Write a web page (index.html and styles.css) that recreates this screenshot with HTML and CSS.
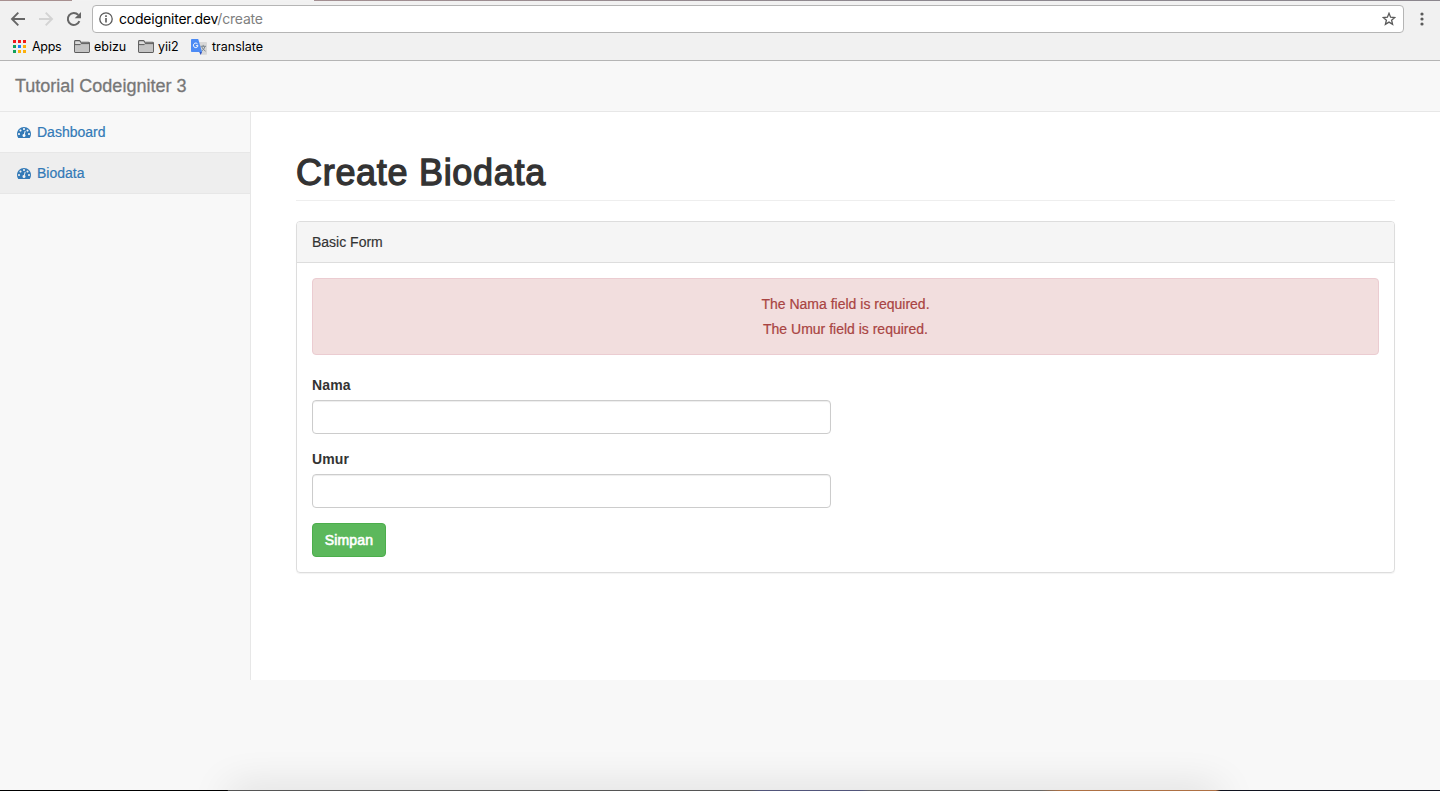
FILE: index.html
```
<!DOCTYPE html>
<html lang="id">
<head>
<meta charset="utf-8">
<title>Tutorial Codeigniter 3</title>
<link rel="stylesheet" href="styles.css">
</head>
<body>
<svg class="defs" aria-hidden="true">
  <symbol id="gauge" viewBox="0 0 1792 1792"><path d="M384 1152q0-53-37.5-90.5t-90.5-37.5-90.5 37.5-37.5 90.5 37.5 90.5 90.5 37.5 90.5-37.5 37.5-90.5zm192-448q0-53-37.5-90.5t-90.5-37.5-90.5 37.5-37.5 90.5 37.5 90.5 90.5 37.5 90.5-37.5 37.5-90.5zm428 481l101-382q6-26-7.5-48.5t-38.5-29.5-48 6.5-30 39.5l-101 382q-60 5-107 43.5t-63 98.5q-20 77 20 146t117 89 146-20 89-117q16-60-6-117t-72-91zm660-33q0-53-37.5-90.5t-90.5-37.5-90.5 37.5-37.5 90.5 37.5 90.5 90.5 37.5 90.5-37.5 37.5-90.5zm-640-640q0-53-37.5-90.5t-90.5-37.5-90.5 37.5-37.5 90.5 37.5 90.5 90.5 37.5 90.5-37.5 37.5-90.5zm448 192q0-53-37.5-90.5t-90.5-37.5-90.5 37.5-37.5 90.5 37.5 90.5 90.5 37.5 90.5-37.5 37.5-90.5zm320 448q0 261-141 483-19 29-54 29h-1402q-35 0-54-29-141-221-141-483 0-182 71-348t191-286 286-191 348-71 348 71 286 191 191 286 71 348z"/></symbol>
  <symbol id="folder" viewBox="0 0 16 13"><path d="M.6 11.6V1.5q0-.9.9-.9h3.8q.6 0 .9.6l.5 1h7.8q.9 0 .9.9v8.5q0 .8-.8.8H1.400q-.8 0-.8-.8z" fill="#dcdcdc" stroke="#5c5c5c" stroke-width="1.100"/><path d="M1.200 4.500h5l.8-.9h7.900v8.300H1.200z" fill="#c4c4c4"/><path d="M.8 4.600h5.400l.9-1h8" fill="none" stroke="#5c5c5c"/></symbol>
</svg>
<div class="window">
  <header class="chrome">
    <div class="toolbar">
      <svg class="nav-icon" width="16" height="16" viewBox="0 0 16 16" fill="none" stroke="#666" stroke-width="1.900"><path d="M15 8H2.500M8.300 1.700L2 8l6.300 6.300"/></svg>
      <svg class="nav-icon" width="16" height="16" viewBox="0 0 16 16" fill="none" stroke="#d3d3d3" stroke-width="1.900"><path d="M1 8h12.500M7.700 1.700L14 8l-6.300 6.300"/></svg>
      <svg class="nav-icon" width="16" height="16" viewBox="0 0 16 16"><path d="M13.400 10.200A6 6 0 1 1 12.300 3.900" fill="none" stroke="#666" stroke-width="2"/><path d="M15 1v6.300H8.700z" fill="#666"/></svg>
      <div class="address">
        <svg width="14" height="14" viewBox="0 0 14 14"><circle cx="7" cy="7" r="6.200" fill="none" stroke="#5a5a5a" stroke-width="1.300"/><path d="M7 6v4.500M7 3.300v1.600" stroke="#5a5a5a" stroke-width="1.600"/></svg>
        <span class="url">codeigniter.dev<span class="path">/create</span></span>
        <svg class="star" width="14" height="14" viewBox="0 0 14 14"><path d="M7 1.300l1.600 3.900 4.200.3-3.200 2.700 1 4.100L7 10.100l-3.600 2.200 1-4.100L1.200 5.500l4.200-.3z" fill="none" stroke="#5a5a5a" stroke-width="1.300"/></svg>
      </div>
      <svg class="more" width="4" height="14" viewBox="0 0 4 14" fill="#5a5a5a"><circle cx="2" cy="2" r="1.600"/><circle cx="2" cy="7" r="1.600"/><circle cx="2" cy="12" r="1.600"/></svg>
    </div>
    <nav class="bookmarks">
      <span class="bookmark apps"><svg width="13" height="13" viewBox="0 0 13 13"><path d="M0 0h3v3H0zM5 0h3v3H5zM10 0h3v3h-3z" fill="#f31a1a"/><path d="M0 5h3v3H0zM0 10h3v3H0z" fill="#12a15c"/><path d="M5 5h3v3H5z" fill="#1a82f7"/><path d="M10 5h3v3h-3zM5 10h3v3H5zM10 10h3v3h-3z" fill="#fcb00b"/></svg>Apps</span>
      <span class="bookmark ebizu"><svg width="16" height="13"><use href="#folder"/></svg>ebizu</span>
      <span class="bookmark yii"><svg width="16" height="13"><use href="#folder"/></svg>yii2</span>
      <span class="bookmark translate"><svg width="16" height="16" viewBox="0 0 16 16"><path d="M7 3h8.200q.8 0 .8.800V15q0 .8-.8.800H10z" fill="#d8d8d8"/><path d="M9.500 7.300H15M12.200 5.900v1.500M14 7.500q-.8 3-3.500 4.700M10.800 8q1 2.500 3.800 4.200" fill="none" stroke="#7c8790" stroke-width="1"/><path d="M8 12.500h3.200L9.700 16z" fill="#3153bd"/><path d="M.8 0h6.400l3.900 13H.8Q0 13 0 12.200V.8Q0 0 .8 0z" fill="#4c8bf5"/><path d="M6.600 5A2.300 2.300 0 1 0 7 6.700H4.900" fill="none" stroke="#fff"/></svg>translate</span>
    </nav>
  </header>
  <header class="navbar"><a class="brand">Tutorial Codeigniter 3</a></header>
  <div class="wrapper">
    <aside class="sidebar">
      <a class="item"><svg width="14" height="14"><use href="#gauge"/></svg><span>Dashboard</span></a>
      <a class="item active"><svg width="14" height="14"><use href="#gauge"/></svg><span>Biodata</span></a>
    </aside>
    <main class="page">
      <h1>Create Biodata</h1>
      <section class="panel">
        <div class="panel-heading">Basic Form</div>
        <form class="panel-body">
          <div class="alert"><p>The Nama field is required.</p><p>The Umur field is required.</p></div>
          <div class="group"><label for="nama">Nama</label><input id="nama" type="text"></div>
          <div class="group"><label for="umur">Umur</label><input id="umur" type="text"></div>
          <button type="button">Simpan</button>
        </form>
      </section>
    </main>
  </div>
  <div class="dock"><div class="dock-shadow"></div></div>
</div>
</body>
</html>
```
FILE: styles.css
```
* { box-sizing: border-box; }
body { margin: 0; background: #000; color: #333; font: 14px/20px "Liberation Sans", Arial, sans-serif; }
svg { display: block; flex: none; }
.defs { position: absolute; width: 0; height: 0; }
.window { height: 791px; display: flex; flex-direction: column; overflow: hidden; }
.chrome { height: 61px; flex: none; background: linear-gradient(90deg, #a89090 72px, #f2f2f2 72px, #f2f2f2 314px, #a38f92 314px, #8c878e 900px) 0 0 / 100% 1px no-repeat, #f1f1f1; border-bottom: 1px solid #b5b5b5; padding-top: 5px; font-family: Inter, sans-serif; color: #000; }
.toolbar { height: 28px; display: flex; align-items: center; padding: 0 16px 0 10px; }
.nav-icon { margin-right: 12px; }
.nav-icon:nth-child(3) { margin-right: 10px; }
.address { flex: 1; height: 28px; display: flex; align-items: center; background: #fff; border: 1px solid #b5b5b5; border-radius: 4px; padding: 0 7px 0 6px; }
.url { margin-left: 6px; font-size: 14px; letter-spacing: -0.2px; }
.path { color: #808080; }
.star { margin-left: auto; }
.more { margin-left: 16px; }
.bookmarks { height: 27px; display: flex; align-items: center; padding-left: 13px; font-size: 12.500px; }
.bookmark { display: flex; align-items: center; gap: 4px; }
.apps { width: 61px; gap: 6px; letter-spacing: -0.3px; }
.ebizu { width: 64px; }
.yii { width: 53px; }
.translate { gap: 5px; }
.navbar { height: 51px; flex: none; background: #f8f8f8; border-bottom: 1px solid #e7e7e7; padding: 15px; }
.brand { display: block; color: #777; font-size: 18px; line-height: 20px; -webkit-text-stroke: .3px #777; }
.wrapper { height: 568px; flex: none; display: flex; background: #f8f8f8; }
.sidebar { width: 250px; }
.item { height: 41px; display: flex; align-items: center; gap: 6px; padding: 0 17px; border-bottom: 1px solid #e7e7e7; color: #337ab7; -webkit-text-stroke: .2px #337ab7; }
.item svg { fill: #337ab7; }
.active { background: #eee; }
.page { flex: 1; background: #fff; border-left: 1px solid #e7e7e7; padding: 41px 45px 0; }
h1 { height: 48px; margin: 0 0 20px; border-bottom: 1px solid #eee; font-size: 36px; font-weight: 400; line-height: 40px; letter-spacing: .7px; -webkit-text-stroke: 1.300px #333; }
.panel { height: 352px; border: 1px solid #ddd; border-radius: 4px; box-shadow: 0 1px 1px rgba(0,0,0,.05); }
.panel-heading { height: 41px; padding: 10px 15px; background: #f5f5f5; border-bottom: 1px solid #ddd; border-radius: 3px 3px 0 0; -webkit-text-stroke: .15px #333; }
.panel-body { padding: 15px; }
.alert { height: 77px; margin-bottom: 20px; padding: 15px; background: #f2dede; border: 1px solid #ebccd1; border-radius: 4px; color: #a94442; text-align: center; -webkit-text-stroke: .2px #a94442; }
.alert p { margin: 0 0 5px; }
.group { width: 519px; margin-bottom: 15px; }
label { display: block; margin-bottom: 5px; font-weight: 700; letter-spacing: .15px; }
input { display: block; width: 100%; height: 34px; border: 1px solid #ccc; border-radius: 4px; box-shadow: inset 0 1px 1px rgba(0,0,0,.075); }
button { display: block; width: 74px; height: 34px; padding: 0; border: 1px solid #4cae4c; border-radius: 4px; background: #5cb85c; color: #fff; font: 14px/20px "Liberation Sans", Arial, sans-serif; letter-spacing: .15px; -webkit-text-stroke: .6px #fff; }
.dock { flex: 1; overflow: hidden; background: #f8f8f8; border-bottom: 1px solid #000; border-image: linear-gradient(90deg, #000 228px, #555 229px 750px, #51557b 760px 860px, #666 870px 1040px, #ae7043 1060px 1215px, #10131f 1220px) 1; }
.dock-shadow { width: 990px; height: 20px; margin: 110px 0 0 229px; box-shadow: 0 0 40px rgba(0,0,0,.16); }
```
